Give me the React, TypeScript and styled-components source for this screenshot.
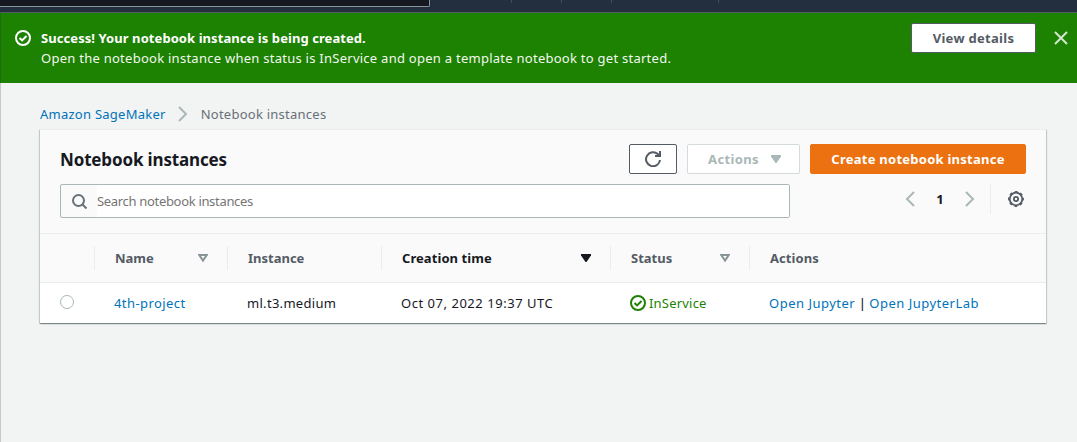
import React from "react";
import styled, { createGlobalStyle } from "styled-components";

const Global = createGlobalStyle`
  * { box-sizing: border-box; }
  body {
    margin: 0;
    background: #f2f3f3;
    font-family: "Noto Sans", "Open Sans", sans-serif;
    font-size: 13px;
    line-height: 20px;
    color: #16191f;
  }
`;

const Page = styled.div`
  height: 442px;
  overflow: hidden;
  display: flex;
  flex-direction: column;
`;

const TopNav = styled.header`
  height: 13px;
  flex: none;
  display: flex;
  background: #232f3e;
  border-bottom: 1px solid #545b64;
`;

const NavSearch = styled.div`
  width: 430px;
  height: 7px;
  background: #161921;
  border: solid #879596;
  border-width: 0 1px 1px 0;
  border-bottom-right-radius: 2px;
`;

const NavTick = styled.i<{ $gap: number }>`
  width: 1px;
  height: 3px;
  margin-left: ${(p) => p.$gap}px;
  background: #414d5c;
`;

const Main = styled.main`
  flex: 1;
  border-left: 1px solid #c3c9c9;
`;

const Flash = styled.section`
  height: 70px;
  margin-left: -1px;
  padding: 10px 8px 0 14px;
  display: flex;
  align-items: flex-start;
  background: #1d8102;
  border-left: 1px solid #1f6b12;
  color: #fff;
`;

const FlashIcon = styled.span`
  display: flex;
  margin-top: 7px;
`;

const FlashText = styled.div`
  flex: 1;
  margin: 5px 0 0 10px;
`;

const Line = styled.div<{ $ls?: number; $bold?: boolean }>`
  letter-spacing: ${(p) => p.$ls ?? 0}px;
  font-weight: ${(p) => (p.$bold ? 700 : 400)};
  color: ${(p) => (p.$bold ? "#fff" : "#f2f8f0")};
  white-space: nowrap;
`;

const Button = styled.button<{ $w: number; $kind?: "primary" | "disabled"; $ls?: number }>`
  width: ${(p) => p.$w}px;
  height: 30px;
  padding: 0 0 0 ${(p) => (p.$kind === "disabled" ? 2 : 0)}px;
  display: flex;
  align-items: center;
  justify-content: center;
  gap: 12px;
  font: 700 13px/20px "Noto Sans", sans-serif;
  letter-spacing: ${(p) => p.$ls ?? 0.25}px;
  white-space: nowrap;
  border-radius: 2px;
  border: 1px solid
    ${(p) => (p.$kind === "primary" ? "#ec7211" : p.$kind === "disabled" ? "#d5dbdb" : "#545b64")};
  background: ${(p) => (p.$kind === "primary" ? "#ec7211" : "#fff")};
  color: ${(p) => (p.$kind === "primary" ? "#fff" : p.$kind === "disabled" ? "#aab7b8" : "#545b64")};
`;

const Close = styled.span`
  display: flex;
  margin: 7px 0 0 17px;
`;

const Crumbs = styled.nav`
  height: 46px;
  padding: 21px 0 0 39px;
  display: flex;
  align-items: flex-start;
  color: #687078;
`;

const CrumbArrow = styled.span`
  display: flex;
  width: 10px;
  margin: 2px 13px 0 12px;
`;

const Text = styled.span<{ $ls?: number }>`
  letter-spacing: ${(p) => p.$ls ?? 0}px;
  white-space: nowrap;
`;

const Link = styled(Text).attrs({ as: "a" })`
  color: #0073bb;
`;

const Card = styled.section`
  width: 1006px;
  height: 194px;
  margin-left: 39px;
  background: #fff;
  border-top: 1px solid #eaeded;
  box-shadow: 0 1px 1px 0 rgba(0, 28, 36, 0.3), 1px 1px 1px 0 rgba(0, 28, 36, 0.15),
    -1px 1px 1px 0 rgba(0, 28, 36, 0.15);
`;

const CardHead = styled.div`
  height: 104px;
  padding: 14px 20px 0;
  background: #fafafa;
  border-bottom: 1px solid #eaeded;
`;

const TitleRow = styled.div`
  display: flex;
  align-items: center;
  gap: 10px;
  height: 30px;
`;

const Title = styled.h1`
  flex: 1;
  margin: 0;
  padding-top: 2px;
  font-size: 17px;
  line-height: 22px;
  letter-spacing: -0.15px;
  white-space: nowrap;
`;

const FilterRow = styled.div`
  display: flex;
  margin-top: 10px;
`;

const SearchBox = styled.div`
  width: 730px;
  height: 34px;
  display: flex;
  align-items: stretch;
  border: 1px solid #aab7b8;
  border-radius: 2px;
  color: #757575;
`;

const SearchIcon = styled.span`
  width: 36px;
  padding: 9px 0 0 11px;
`;

const SearchText = styled.span`
  flex: 1;
  line-height: 32px;
  background: #fff;
  letter-spacing: -0.32px;
`;

const Pager = styled.div`
  flex: 1;
  height: 30px;
  display: flex;
  align-items: center;
  justify-content: flex-end;
`;

const PageNumber = styled.b`
  width: 50px;
  text-align: center;
`;

const Settings = styled.span`
  height: 30px;
  margin-left: 15px;
  padding-left: 17px;
  display: flex;
  align-items: center;
  border-left: 1px solid #eaeded;
  margin-right: 2px;
`;

const Grid = styled.div`
  display: grid;
  grid-template-columns: 55px 133px 154px 229px 139px 1fr;
`;

const HeadRow = styled(Grid)`
  height: 49px;
  padding: 12px 0;
  background: #fafafa;
  border-bottom: 1px solid #eaeded;
  color: #545b64;
`;

const HeadCell = styled.div<{ $active?: boolean; $ls?: number; $last?: boolean }>`
  display: flex;
  align-items: center;
  justify-content: space-between;
  padding: 0 19px 0 20px;
  font-weight: 700;
  letter-spacing: ${(p) => p.$ls ?? 0}px;
  color: ${(p) => (p.$active ? "#16191f" : "#545b64")};
  border-right: ${(p) => (p.$last ? 0 : 1)}px solid #eaeded;
`;

const BodyRow = styled(Grid)`
  height: 40px;
  align-items: center;
`;

const Cell = styled.div`
  display: flex;
  align-items: center;
  padding-left: 19px;
  white-space: nowrap;
`;

const Radio = styled.span`
  width: 14px;
  height: 14px;
  margin: -2px 0 0 1px;
  border: 1px solid #aab7b8;
  border-radius: 50%;
`;

const Status = styled(Text)`
  color: #1d8102;
  margin-left: 3px;
`;

const Separator = styled.span`
  width: 14px;
  text-align: center;
  font-weight: 500;
`;

const CheckCircle = ({ color }: { color: string }) => (
  <svg width="16" height="16" viewBox="0 0 16 16" fill="none" stroke={color} strokeWidth="2">
    <circle cx="8" cy="8" r="7" />
    <path d="M4.5 8l2.6 2.4 4.4-4.4" />
  </svg>
);

const Chevron = ({ left }: { left?: boolean }) => (
  <svg width="10" height="16" viewBox="0 0 10 16" fill="none" stroke="#aab7b8" strokeWidth="2">
    <path d={left ? "M9 1L2 8l7 7" : "M1 1l7 7-7 7"} />
  </svg>
);

const SortIcon = ({ filled }: { filled?: boolean }) =>
  filled ? (
    <svg width="10" height="8" viewBox="0 0 10 8">
      <path d="M0 0h10v1.5L5.5 8h-1L0 1.5z" fill="#16191f" />
    </svg>
  ) : (
    <svg width="10" height="8" viewBox="0 0 10 8" fill="none" stroke="#879596" strokeWidth="2">
      <path d="M1.2 1h7.6L5 6.6z" />
    </svg>
  );

export default function App() {
  return (
    <Page>
      <Global />
      <TopNav>
        <NavSearch />
        <NavTick $gap={81} />
        <NavTick $gap={49} />
        <NavTick $gap={49} />
        <NavTick $gap={106} />
      </TopNav>
      <Main>
        <Flash>
          <FlashIcon>
            <CheckCircle color="#fff" />
          </FlashIcon>
          <FlashText>
            <Line $bold $ls={0.07}>Success! Your notebook instance is being created.</Line>
            <Line $ls={0.26}>Open the notebook instance when status is InService and open a template notebook to get started.</Line>
          </FlashText>
          <Button $w={125} $ls={0.3}>View details</Button>
          <Close>
            <svg width="16" height="16" viewBox="0 0 16 16" stroke="#d5e6d1" strokeWidth="2">
              <path d="M2 2l12 12M14 2L2 14" />
            </svg>
          </Close>
        </Flash>
        <Crumbs>
          <Link $ls={0.25}>Amazon SageMaker</Link>
          <CrumbArrow>
            <Chevron />
          </CrumbArrow>
          <Text $ls={0.25}>Notebook instances</Text>
        </Crumbs>
        <Card>
          <CardHead>
            <TitleRow>
              <Title>Notebook instances</Title>
              <Button $w={48} aria-label="Refresh">
                <svg width="16" height="16" viewBox="0 0 16 16" fill="none" stroke="#545b64" strokeWidth="2">
                  <path d="M15 9a7 7 0 1 1-2.2-5.9L15 5" />
                  <path d="M15 0v5h-5" />
                </svg>
              </Button>
              <Button $w={113} $kind="disabled" $ls={0.38}>
                Actions
                <svg width="10" height="8" viewBox="0 0 10 8">
                  <path d="M0 0h10v1.5L5.5 8h-1L0 1.5z" fill="#aab7b8" />
                </svg>
              </Button>
              <Button $w={216} $kind="primary">Create notebook instance</Button>
            </TitleRow>
            <FilterRow>
              <SearchBox>
                <SearchIcon>
                  <svg width="16" height="16" viewBox="0 0 16 16" fill="none" stroke="#687078" strokeWidth="2">
                    <circle cx="6.5" cy="6.5" r="5.5" />
                    <path d="M10.5 10.5l4 4" />
                  </svg>
                </SearchIcon>
                <SearchText>Search notebook instances</SearchText>
              </SearchBox>
              <Pager>
                <Chevron left />
                <PageNumber>1</PageNumber>
                <Chevron />
                <Settings>
                  <svg width="16" height="16" viewBox="0 0 16 16" fill="none" stroke="#545b64">
                    <circle cx="8" cy="8" r="6.3" strokeWidth="1.8" />
                    <circle cx="8" cy="8" r="7.3" strokeWidth="1.3" strokeDasharray="3 2.733" strokeDashoffset="1.5" />
                    <circle cx="8" cy="8" r="2.1" strokeWidth="1.8" />
                  </svg>
                </Settings>
              </Pager>
            </FilterRow>
          </CardHead>
          <HeadRow>
            <HeadCell />
            <HeadCell>Name<SortIcon /></HeadCell>
            <HeadCell>Instance</HeadCell>
            <HeadCell $active $ls={0.07}>Creation time<SortIcon filled /></HeadCell>
            <HeadCell>Status<SortIcon /></HeadCell>
            <HeadCell $last $ls={0.07}>Actions</HeadCell>
          </HeadRow>
          <BodyRow>
            <Cell><Radio /></Cell>
            <Cell><Link $ls={0.42}>4th-project</Link></Cell>
            <Cell><Text $ls={0.3}>ml.t3.medium</Text></Cell>
            <Cell><Text $ls={0.53}>Oct 07, 2022 19:37 UTC</Text></Cell>
            <Cell>
              <CheckCircle color="#1d8102" />
              <Status $ls={0.2}>InService</Status>
            </Cell>
            <Cell>
              <Link $ls={0.5}>Open Jupyter</Link>
              <Separator>|</Separator>
              <Link $ls={0.5}>Open JupyterLab</Link>
            </Cell>
          </BodyRow>
        </Card>
      </Main>
    </Page>
  );
}
